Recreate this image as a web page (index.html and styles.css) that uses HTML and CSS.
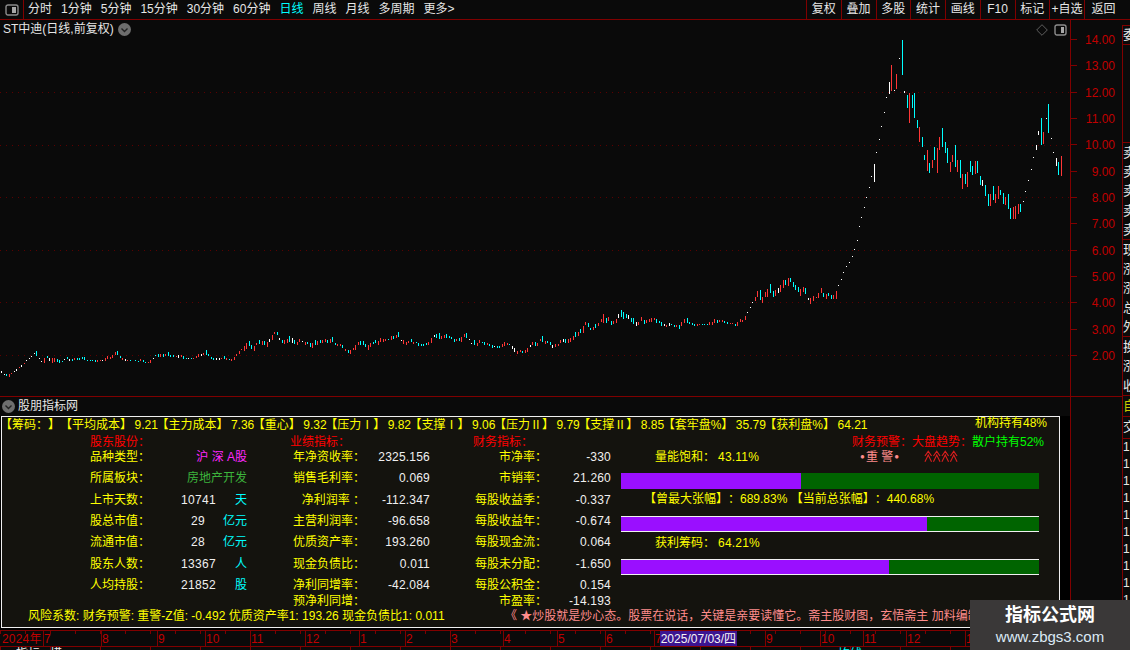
FILE: index.html
```html
<!DOCTYPE html>
<html lang="zh-CN">
<head>
<meta charset="utf-8">
<title>ST中迪</title>
<link rel="stylesheet" href="styles.css">
</head>
<body>
<div class="app">
  <header class="toolbar">
    <div class="tool-icon">
      <svg width="14" height="12" viewBox="0 0 14 12"><rect x="1" y="1" width="12" height="10" rx="2" class="ico-line"/><rect x="7" y="3" width="4" height="6" class="ico-fill"/></svg>
    </div>
    <nav class="periods">
      <span>分时</span><span>1分钟</span><span>5分钟</span><span>15分钟</span><span>30分钟</span><span>60分钟</span><span class="on">日线</span><span>周线</span><span>月线</span><span>多周期</span><span>更多&gt;</span>
    </nav>
    <div class="actions">
      <span>复权</span><span>叠加</span><span>多股</span><span>统计</span><span>画线</span><span>F10</span><span>标记</span><span>+自选</span><span class="last">返回</span>
    </div>
  </header>

  <div class="body">
    <main class="stage">
      <section class="upper">
        <div class="chart">
          <svg class="plot" width="1070" height="376" viewBox="0 20 1070 376">
            <g class="grid">
              <path d="M0 92.5H1070M0 145.5H1070M0 197.5H1070M0 250.5H1070M0 302.5H1070M0 355.5H1070"/>
            </g>
            <g transform="translate(.5 300) scale(.33333)" class="bars">
              <path class="w" d="M3 213V219M12 222V225M42 213V216M48 207V213M63 195V201M78 180V183M87 174V177M93 168V171M102 159V162M117 174V177M123 183V186M147 174V183M192 177V180M207 177V183M306 180V183M375 177V183M460 174V177M535 165V174M565 174V177M604 162V168M649 174V180M658 174V180M808 117V126M838 114V120M877 114V129M907 123V126M1204 120V123"/>
              <path class="r" d="M28 222V231M33 219V222M57 201V204M72 189V192M132 174V189M156 174V189M162 174V186M222 174V180M291 180V186M300 180V183M315 174V183M321 168V177M330 171V177M336 165V174M345 156V165M366 174V180M381 180V183M421 178V184M445 186V189M451 180V189M481 162V171M496 162V168M529 168V171M544 165V171M580 174V177M589 168V174M595 162V171M610 159V165M664 174V177M679 174V180M694 177V183M703 171V180M709 162V168M718 153V162M724 147V150M733 138V153M739 129V147M763 138V153M769 129V135M787 123V135M802 126V141M817 105V120M823 96V102M853 120V132M862 117V129M892 126V135M898 117V126M916 126V135M937 129V144M952 123V135M967 120V129M976 117V126M991 117V129M1012 132V138M1021 132V138M1036 147V153M1051 150V162M1060 144V150M1066 135V150M1075 126V135M1105 135V150M1111 129V141M1135 123V135M1141 114V126M1150 117V126M1156 117V123M1174 108V120M1189 105V114M1210 120V132M1219 126V135M1225 123V129M1240 126V132"/>
              <path class="c" d="M18 222V229M108 153V168M141 168V174M171 177V186M177 180V189M186 183V186M201 171V177M216 177V183M231 174V180M237 174V180M246 171V177M252 171V180M261 180V183M270 180V183M276 180V183M285 180V186M351 153V165M360 168V174M390 180V183M405 180V183M415 183V186M430 180V186M436 186V189M466 166V168M475 162V171M490 162V171M505 156V168M511 165V171M520 165V171M550 168V177M559 174V177M574 174V177M619 150V165M625 162V168M634 171V177M640 174V180M673 168V177M688 177V180M748 123V138M754 135V147M778 120V132M793 123V135M832 96V105M847 120V129M868 108V126M883 120V132M922 126V132M931 129V141M946 120V135M961 120V129M982 120V129M997 111V126M1006 129V135M1027 135V144M1045 150V159M1081 123V135M1090 123V135M1096 132V141M1120 126V132M1126 120V129M1165 117V120M1180 108V117M1195 96V111M1234 117V126M1249 126V129M1255 129V138"/>
            </g>
            <g transform="translate(420.5 270) scale(.33333)" class="bars">
              <path class="w" d="M42 195V201M147 207V210M153 219V222M222 228V231M276 228V237M282 234V246M330 225V231M396 225V234M429 207V216M594 132V144M624 135V147M648 156V168M732 162V168M747 159V168M981 126V129M990 111V114M996 96V99M1074 54V69M1164 84V90M1254 45V48M1263 27V30M1269 6V9"/>
              <path class="r" d="M24 216V225M33 204V219M63 198V207M72 195V204M108 207V213M123 201V216M132 192V201M171 219V228M177 210V219M201 219V225M246 222V231M252 216V228M261 219V225M291 243V252M300 240V246M315 240V249M321 234V246M336 216V225M351 219V228M360 207V213M375 213V222M405 222V231M414 222V228M420 210V219M444 207V219M450 204V216M459 198V210M474 186V198M489 168V189M495 156V165M519 171V180M534 159V168M543 147V156M549 132V159M564 141V153M579 153V162M588 147V159M654 156V165M663 141V153M678 150V159M687 147V156M693 144V156M702 144V150M738 165V171M768 165V171M783 156V168M792 147V159M831 162V168M837 162V165M867 156V165M876 156V165M882 147V159M897 150V156M906 150V156M930 159V162M936 159V162M951 156V168M960 147V156M966 150V156M975 138V150M1005 81V93M1011 63V81M1026 81V99M1035 66V81M1041 57V81M1065 60V78M1080 45V66M1089 30V54M1104 24V48M1140 57V78M1149 51V66M1170 84V102M1179 78V93M1188 81V84M1194 69V84M1203 54V69M1218 72V87M1239 75V87M1248 63V87"/>
              <path class="c" d="M3 222V228M9 222V228M18 219V225M48 192V204M57 189V207M78 192V204M87 198V204M93 201V207M102 207V216M117 204V213M138 189V204M162 210V225M186 216V219M192 216V225M207 222V228M216 225V234M231 228V234M237 228V234M267 222V225M306 243V249M345 216V228M366 198V216M381 213V219M390 216V225M435 207V219M465 186V201M480 177V189M504 159V171M510 174V180M525 162V174M558 144V159M573 153V165M603 120V141M609 126V147M618 132V144M633 144V156M639 144V162M672 150V162M708 147V159M717 153V159M723 156V168M753 162V165M762 165V171M777 165V177M801 144V159M807 156V162M816 159V165M822 162V168M846 162V165M852 162V165M861 162V165M891 150V159M912 153V159M921 156V162M945 162V168M1020 60V90M1050 42V69M1059 63V81M1095 30V45M1110 24V36M1119 36V51M1125 45V60M1134 51V66M1155 54V72M1209 69V81M1224 69V78M1233 75V87"/>
            </g>
            <g transform="translate(820.5 30) scale(.33333)" class="bars">
              <path class="w" d="M78 708V711M87 696V699M96 678V681M102 656V659M110 630V633M118 589V592M124 562V565M133 532V535M139 502V505M148 472V475M154 439V442M163 402V456M169 367V370M178 328V331M184 289V292M193 247V250M199 202V205M208 156V192M223 181V184M238 85V88M253 183V189M487 450V468M610 514V517M616 484V487M625 451V454M634 418V421M640 382V385M649 345V360M655 303V315M679 265V268M694 325V328M700 367V370M709 384V408"/>
              <path class="r" d="M214 105V183M229 132V177M268 189V279M298 291V336M322 360V423M337 390V414M352 354V429M358 321V360M391 396V426M397 375V396M412 390V426M427 432V477M442 426V471M466 393V432M511 492V528M526 492V519M535 468V507M556 501V525M580 531V567M586 528V567M595 522V552M670 306V342M724 378V438"/>
              <path class="c" d="M247 30V135M262 195V234M277 195V234M283 189V264M292 270V294M307 321V351M313 375V390M328 399V429M343 351V390M367 294V351M376 336V369M382 354V399M406 345V411M421 390V444M436 432V462M451 393V426M457 408V435M472 393V429M481 438V465M496 465V498M505 492V528M520 468V510M541 480V495M550 489V522M565 492V537M571 534V567M601 522V546M664 264V345M685 222V309M715 396V435"/>
            </g>
          </svg>
          <div class="chart-title">
            <span>ST中迪(日线,前复权)</span>
            <svg class="chev" width="13" height="13" viewBox="0 0 13 13"><circle cx="6.5" cy="6.5" r="6.5"/><path d="M3.5 5.5L6.5 8.5L9.5 5.5"/></svg>
          </div>
          <div class="chart-tools">
            <svg width="12" height="12" viewBox="0 0 12 12"><path class="ico-dim" d="M6 .7L11.3 6L6 11.3L.7 6Z"/></svg>
            <svg width="13" height="12" viewBox="0 0 13 12"><rect x="1" y="1" width="11" height="10" rx="2" class="ico-line"/><rect x="7" y="3" width="3" height="6" class="ico-fill"/></svg>
          </div>
        </div>
        <div class="axis">
          <div class="tick"><span>14.00</span></div>
          <div class="tick"><span>13.00</span></div>
          <div class="tick"><span>12.00</span></div>
          <div class="tick"><span>11.00</span></div>
          <div class="tick"><span>10.00</span></div>
          <div class="tick"><span>9.00</span></div>
          <div class="tick"><span>8.00</span></div>
          <div class="tick"><span>7.00</span></div>
          <div class="tick"><span>6.00</span></div>
          <div class="tick"><span>5.00</span></div>
          <div class="tick"><span>4.00</span></div>
          <div class="tick"><span>3.00</span></div>
          <div class="tick"><span>2.00</span></div>
        </div>
      </section>

      <section class="lower">
        <div class="panel">
          <div class="panel-head">
            <svg class="chev" width="13" height="13" viewBox="0 0 13 13"><circle cx="6.5" cy="6.5" r="6.5"/><path d="M3.5 5.5L6.5 8.5L9.5 5.5"/></svg>
            <span>股朋指标网</span>
          </div>
          <div class="board">
            <div class="top-line">
              <span>【筹码：】【平均成本】<b class="n">9.21</b>【主力成本】<b class="n">7.36</b>【重心】<b class="n">9.32</b>【压力Ⅰ】<b class="n">9.82</b>【支撑Ⅰ】<b class="n">9.06</b>【压力Ⅱ】<b class="n">9.79</b>【支撑Ⅱ】<b class="n">8.85</b>【套牢盘%】<b class="n">35.79</b>【获利盘%】<b class="n">64.21</b></span>
              <span class="inst">机构持有48%</span>
            </div>
            <div class="metrics">
              <div class="col col-a">
                <div class="heading">股东股份：</div>
                <div class="row"><span class="lab">品种类型：</span><span class="wide magenta">沪 深 A股</span></div>
                <div class="row"><span class="lab">所属板块：</span><span class="wide green">房地产开发</span></div>
                <div class="row"><span class="lab">上市天数：</span><span class="num">10741</span><span class="unit">天</span></div>
                <div class="row"><span class="lab">股总市值：</span><span class="num">29</span><span class="unit">亿元</span></div>
                <div class="row"><span class="lab">流通市值：</span><span class="num">28</span><span class="unit">亿元</span></div>
                <div class="row"><span class="lab">股东人数：</span><span class="num">13367</span><span class="unit">人</span></div>
                <div class="row"><span class="lab">人均持股：</span><span class="num">21852</span><span class="unit">股</span></div>
              </div>
              <div class="col col-b">
                <div class="heading heading-out">业绩指标：</div>
                <div class="row"><span class="lab">年净资收率：</span><span class="val">2325.156</span></div>
                <div class="row"><span class="lab">销售毛利率：</span><span class="val">0.069</span></div>
                <div class="row"><span class="lab">净利润率 ：</span><span class="val">-112.347</span></div>
                <div class="row"><span class="lab">主营利润率：</span><span class="val">-96.658</span></div>
                <div class="row"><span class="lab">优质资产率：</span><span class="val">193.260</span></div>
                <div class="row"><span class="lab">现金负债比：</span><span class="val">0.011</span></div>
                <div class="row"><span class="lab">净利同增率：</span><span class="val">-42.084</span></div>
                <div class="row row-tail"><span class="lab">预净利同增：</span></div>
              </div>
              <div class="col col-c">
                <div class="heading">财务指标：</div>
                <div class="row"><span class="lab">市净率：</span><span class="val">-330</span></div>
                <div class="row"><span class="lab">市销率：</span><span class="val">21.260</span></div>
                <div class="row"><span class="lab">每股收益季：</span><span class="val">-0.337</span></div>
                <div class="row"><span class="lab">每股收益年：</span><span class="val">-0.674</span></div>
                <div class="row"><span class="lab">每股现金流：</span><span class="val">0.064</span></div>
                <div class="row"><span class="lab">每股未分配：</span><span class="val">-1.650</span></div>
                <div class="row"><span class="lab">每股公积金：</span><span class="val">0.154</span></div>
                <div class="row row-tail"><span class="lab">市盈率：</span><span class="val">-14.193</span></div>
              </div>
              <div class="col-d">
                <div class="alerts">
                  <span class="alert-a">财务预警：</span><span class="alert-b">大盘趋势：</span><span class="retail">散户持有52%</span>
                </div>
                <div class="gauge-line">
                  <span>量能饱和：</span><span class="pct">43.11%</span>
                  <span class="warn"><i>●</i>重 警<i>●</i></span>
                  <svg class="arrows" width="36" height="13" viewBox="0 0 36 13">
                    <path d="M1 6L4.5 1L8 6M1 12L4.5 5L8 12M10 6L13.500 1L17 6M10 12L13.500 5L17 12M19 6L22.500 1L26 6M19 12L22.500 5L26 12M28 6L31.500 1L35 6M28 12L31.500 5L35 12"/>
                  </svg>
                </div>
                <div class="bar bar-one"><div class="fill fill-one"></div></div>
                <div class="rise-line">【曾最大张幅】：689.83% 【当前总张幅】：440.68%</div>
                <div class="bar framed bar-two"><div class="fill fill-two"></div></div>
                <div class="gauge-line chips"><span>获利筹码：</span><span class="pct">64.21%</span></div>
                <div class="bar framed bar-three"><div class="fill fill-three"></div></div>
              </div>
            </div>
            <div class="foot">
              <span class="risk">风险系数: 财务预警: 重警-Z值: -0.492 优质资产率1: 193.26 现金负债比1: 0.011</span>
              <span class="motto">《 ★炒股就是炒心态。股票在说话，关键是亲要读懂它。斋主股财图，玄悟斋主 加料编制</span>
            </div>
          </div>
        </div>
        <div class="axis-blank"></div>
      </section>

      <section class="timeline">
        <div class="years">
          <span class="year">2024年</span><span>7</span><span>8</span><span>9</span><span>10</span><span>11</span><span>12</span><span>1</span><span>2</span><span>3</span><span>4</span><span>5</span><span>6</span><span>7<b class="date">2025/07/03/四</b></span><span>9</span><span>10</span><span>11</span><span>12</span><span>1</span>
        </div>
        <div class="strip"><span>指标</span><span class="strip-a">模</span><span class="strip-b">均线</span></div>
      </section>
    </main>

    <aside class="side">
      <div class="side-in">
        <div class="s-top"><span>委</span></div>
        <div class="s-gap"></div>
        <div class="s-group"><span>卖</span><span>卖</span><span>卖</span><span>卖</span><span>卖</span></div>
        <div class="s-group"><span>现</span><span>涨</span><span>涨</span><span>总</span><span>外</span></div>
        <div class="s-group s-short"><span>换</span><span>涨</span><span>收</span></div>
        <div class="s-self">自</div>
        <div class="s-cell">交</div>
        <div class="s-nums"><span>1</span><span>1</span><span>1</span><span>1</span><span>1</span><span>1</span><span>1</span><span>1</span><span>1</span><span>1</span></div>
      </div>
    </aside>
  </div>

  <div class="stamp">
    <strong>指标公式网</strong>
    <span>www.zbgs3.com</span>
  </div>
</div>
</body>
</html>
```

FILE: styles.css
```css
* { box-sizing: border-box; }
html, body { margin: 0; padding: 0; background: #0a0a0a; }
body {
  font-family: "Liberation Sans", "Noto Sans CJK SC", sans-serif;
  font-size: 12px;
  color: #e6e6e6;
  text-spacing-trim: space-all;
}
.app {
  position: relative;
  width: 1130px;
  height: 650px;
  overflow: hidden;
  display: flex;
  flex-direction: column;
}

/* toolbar */
.toolbar {
  height: 20px;
  flex: none;
  display: flex;
  align-items: stretch;
  padding-right: 8px;
  border-bottom: 1px solid #800000;
  line-height: 19px;
  white-space: nowrap;
}
.tool-icon {
  width: 24px;
  flex: none;
  display: flex;
  align-items: center;
  justify-content: center;
  border-right: 1px solid #800000;
}
.ico-line { fill: none; stroke: #8c8c8c; stroke-width: 1.4; }
.ico-fill { fill: #a8a8a8; }
.ico-dim { fill: none; stroke: #5e5e5e; stroke-width: 1; }
.periods {
  display: flex;
  gap: 9px;
  padding-left: 4px;
}
.periods .on { color: #00ffff; }
.actions {
  margin-left: auto;
  display: flex;
}
.actions span {
  width: 34.75px;
  text-align: center;
  border-left: 1px solid #800000;
}
.actions .last { width: 38px; }

/* main body */
.body { flex: 1; display: flex; min-height: 0; }
.stage { width: 1122px; flex: none; display: flex; flex-direction: column; }
.upper {
  height: 377px;
  flex: none;
  display: flex;
  border-bottom: 1px solid #800000;
}
.chart { position: relative; width: 1070px; flex: none; }
.plot { display: block; }
.grid path {
  fill: none;
  stroke: #5c0000;
  stroke-width: 1;
  stroke-dasharray: 1 5;
  shape-rendering: crispEdges;
}
.bars path { fill: none; stroke-width: 3; shape-rendering: crispEdges; }
.bars .r { stroke: #ff3636; }
.bars .c { stroke: #00ffff; }
.bars .w { stroke: #ffffff; }
.chart-title {
  position: absolute;
  left: 3px;
  top: 1px;
  display: flex;
  align-items: center;
  gap: 4px;
  line-height: 16px;
}
.chev { flex: none; display: block; }
.chev circle { fill: #6e6e6e; }
.chev path { fill: none; stroke: #222; stroke-width: 1.4; }
.chart-tools {
  position: absolute;
  right: 3px;
  top: 4px;
  display: flex;
  align-items: center;
  gap: 6px;
}
.axis {
  width: 52px;
  flex: none;
  border-left: 1px solid #800000;
  padding-top: 6px;
  display: flex;
  flex-direction: column;
  color: #c00000;
}
.tick {
  height: 26.33px;
  flex: none;
  display: flex;
  align-items: center;
  justify-content: flex-end;
  position: relative;
  padding: 2px 7px 0 0;
}
.tick::before {
  content: "";
  position: absolute;
  left: 0;
  top: 13px;
  width: 6px;
  height: 1px;
  background: #800000;
}

/* lower panel */
.lower { height: 233px; flex: none; display: flex; }
.panel { width: 1070px; flex: none; display: flex; flex-direction: column; background: #000; }
.panel-head {
  height: 19px;
  flex: none;
  display: flex;
  align-items: center;
  gap: 3px;
  padding-left: 2px;
  background: #0a0a0a;
  line-height: 19px;
}
.axis-blank { width: 52px; flex: none; border-left: 1px solid #800000; }
.board {
  width: 1059px;
  height: 212px;
  margin-left: 1px;
  border: 1px solid #f0f0f0;
  background: #14130e;
  color: #ffff00;
  display: flex;
  flex-direction: column;
  white-space: nowrap;
}
.top-line {
  height: 15px;
  flex: none;
  display: flex;
  justify-content: space-between;
  padding: 0 12px 0 0;
  margin: 1px 0 0 -2px;
  line-height: 15px;
}
.n { font-weight: 400; margin-left: 2.5px; margin-right: -1.5px; }
.inst { color: #ffff00; margin-top: -2px; }
.metrics {
  flex: none;
  display: flex;
  padding-left: 88px;
  margin-top: 1px;
}
.col {
  display: grid;
  grid-template-rows: 12.3px repeat(7, 21.33px) 14px;
  flex: none;
}
.col-a { width: 157px; }
.col-b { width: 138px; margin-left: 45px; }
.col-c { width: 138px; margin-left: 43px; }
.col-d { width: 418px; margin-left: 10px; flex: none; }
.heading { color: #ff0000; line-height: 16px; height: 12.3px; }
.heading-out { margin-left: -2px; }
.row { display: flex; align-items: center; line-height: 16px; height: 21.33px; }
.col-a .lab { flex: none; }
.col-b .lab { width: 73px; text-align: right; flex: none; }
.col-c .lab { width: 74px; text-align: right; flex: none; }
.val { flex: 1; text-align: right; color: #f0f0f0; letter-spacing: .2px; }
.num { margin-left: auto; width: 34px; text-align: center; color: #f0f0f0; letter-spacing: .3px; }
.unit { width: 32px; text-align: right; color: #00ffff; }
.wide { margin-left: auto; }
.magenta { color: #ff28ff; }
.green { color: #3cb43c; }
.row-tail { height: 14px; margin-top: -2px; }

.alerts {
  height: 12.3px;
  display: flex;
  padding-left: 231px;
  color: #ff0000;
  line-height: 16px;
}
.alert-a { width: 63px; }
.alert-b { width: 60px; }
.retail { color: #00ff00; }
.gauge-line {
  height: 21.33px;
  display: flex;
  align-items: center;
  padding-left: 34px;
  line-height: 16px;
}
.pct { margin-left: 3px; letter-spacing: .2px; }
.warn {
  margin-left: 101px;
  width: 40px;
  flex: none;
  color: #ff8c8c;
  letter-spacing: 0;
  white-space: nowrap;
  display: flex;
  align-items: center;
  gap: 1px;
}
.warn i { font-style: normal; font-size: 8px; }
.arrows { margin-left: 24px; flex: none; width: 34px; }
.arrows path { fill: none; stroke: #d81e1e; stroke-width: 1.2; }
.bar { height: 16px; width: 418px; background: #006400; }
.fill { height: 100%; background: #9a0fff; }
.fill-one { width: 180px; }
.fill-two { width: 306px; }
.fill-three { width: 268px; }
.framed { border-top: 1px solid #f0f0f0; border-bottom: 1px solid #f0f0f0; }
.bar-one { margin-top: 5.4px; }
.rise-line {
  height: 18px;
  line-height: 20px;
  padding-left: 23px;
}
.bar-two { margin-top: 9px; }
.chips { height: 20px; padding-top: 2px; }
.bar-three { margin-top: 7px; }
.foot {
  height: 16px;
  margin-top: -2px;
  display: flex;
  line-height: 16px;
  overflow: hidden;
}
.risk { margin-left: 26px; width: 477px; flex: none; }
.motto { color: #ff8c8c; }

/* time axis */
.timeline { flex: 1; min-height: 0; color: #c00000; }
.years {
  height: 17px;
  display: grid;
  grid-template-columns: 43px 58px 56px 48px 45px 55px 54px 46px 45px 53px 54px 48px 49px 111px 55px 43px 43px 59px 1fr;
  width: 1070px;
  border-top: 1px solid #800000;
  border-bottom: 1px solid #800000;
  line-height: 16px;
  background: repeating-linear-gradient(90deg, #800000 0 1px, transparent 1px 25px) 0 0 / 100% 3px no-repeat;
}
.years span { border-left: 1px solid #800000; white-space: nowrap; }
.years .year { border-left: 0; padding-left: 2px; letter-spacing: .2px; }
.date {
  display: inline-block;
  margin-left: -2px;
  padding: 0 1px;
  height: 15px;
  vertical-align: top;
  background: #3c1490;
  color: #f5f5f5;
  font-weight: 400;
}
.strip {
  height: 3px;
  overflow: hidden;
  display: flex;
  color: #f0f0f0;
  line-height: 14px;
  padding-left: 16px;
  background: repeating-linear-gradient(90deg, #800000 0 1px, transparent 1px 50px);
}
.strip-a { margin-left: 10px; }
.strip-b { margin-left: 776px; color: #00ffff; }

/* right column */
.side { width: 8px; flex: none; padding-top: 5px; overflow: hidden; }
.side-in {
  height: 100%;
  border-left: 1px solid #800000;
  display: flex;
  flex-direction: column;
  color: #e6e6e6;
  font-size: 13px;
}
.s-top { height: 20px; flex: none; border-top: 1px solid #800000; border-bottom: 1px solid #800000; line-height: 18px; }
.s-gap { height: 97px; flex: none; }
.s-group {
  height: 97px;
  flex: none;
  display: flex;
  flex-direction: column;
  justify-content: space-around;
  border-top: 1px solid #800000;
  line-height: 17px;
}
.s-short { height: 59px; }
.s-self { height: 22px; flex: none; border-top: 1px solid #800000; border-bottom: 1px solid #800000; color: #c8c800; line-height: 20px; }
.s-cell { height: 22px; flex: none; border-bottom: 1px solid #800000; line-height: 20px; }
.s-nums { display: flex; flex-direction: column; padding-top: 0; font-size: 12px; line-height: 17px; }

/* watermark */
.stamp {
  position: absolute;
  left: 970px;
  top: 600px;
  width: 160px;
  height: 50px;
  background: #3a3838;
  display: flex;
  flex-direction: column;
  align-items: center;
  justify-content: center;
}
.stamp strong { font-size: 18px; line-height: 24px; color: #ffffff; }
.stamp span { font-size: 15px; line-height: 20px; color: #dceaf5; }
```
